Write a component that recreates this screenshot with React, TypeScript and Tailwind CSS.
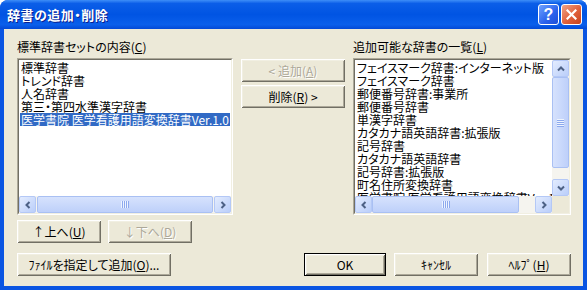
import React from "react";

type Dir = "left" | "right" | "up" | "down";

const CHEV: Record<Dir, string> = {
  left: "M5.5 1 L2.5 4 L5.5 7",
  right: "M2.5 1 L5.5 4 L2.5 7",
  up: "M1 5.5 L4 2.5 L7 5.5",
  down: "M1 2.5 L4 5.5 L7 2.5",
};

function ArrowBtn({ dir }: { dir: Dir }) {
  return (
    <div className="w-[17px] h-[17px] shrink-0 rounded-[2px] border border-[#B4C8F6] bg-[linear-gradient(135deg,#E3ECFE,#BACEFA)] flex items-center justify-center">
      <svg width="8" height="8" viewBox="0 0 8 8">
        <path d={CHEV[dir]} fill="none" stroke="#4D6185" strokeWidth="2" />
      </svg>
    </div>
  );
}

function GripV() {
  return (
    <svg width="8" height="7" viewBox="0 0 8 7">
      {[0, 2, 4, 6].map((x) => (
        <g key={x}>
          <rect x={x} y="0" width="1" height="7" fill="#EEF4FE" />
          <rect x={x + 1} y="0" width="1" height="7" fill="#8CA9EE" />
        </g>
      ))}
    </svg>
  );
}

function GripH() {
  return (
    <svg width="7" height="8" viewBox="0 0 7 8">
      {[0, 2, 4, 6].map((y) => (
        <g key={y}>
          <rect x="0" y={y} width="7" height="1" fill="#EEF4FE" />
          <rect x="0" y={y + 1} width="7" height="1" fill="#8CA9EE" />
        </g>
      ))}
    </svg>
  );
}

function U({ children }: { children: React.ReactNode }) {
  return <span className="underline underline-offset-[1px]">{children}</span>;
}

function Btn({
  children,
  className = "",
  disabled = false,
  def = false,
}: {
  children: React.ReactNode;
  className?: string;
  disabled?: boolean;
  def?: boolean;
}) {
  return (
    <div
      className={`h-[23px] shrink-0 flex items-center justify-center bg-[#ECE9D8] text-[12px] leading-[14px] whitespace-nowrap ${
        def
          ? "border border-black shadow-[inset_1px_1px_0_#fff,inset_-1px_-1px_0_#716F64,inset_2px_2px_0_#F1EFE2,inset_-2px_-2px_0_#ACA899]"
          : "shadow-[inset_1px_1px_0_#fff,inset_-1px_-1px_0_#716F64,inset_2px_2px_0_#F1EFE2,inset_-2px_-2px_0_#ACA899]"
      } ${disabled ? "text-[#ACA899] [text-shadow:1px_1px_0_#fff]" : "text-black"} ${className}`}
    >
      {children}
    </div>
  );
}

function Sunken({ children, className = "" }: { children: React.ReactNode; className?: string }) {
  return (
    <div className={`border border-t-[#ACA899] border-l-[#ACA899] border-b-white border-r-white ${className}`}>
      <div className="w-full h-full border border-t-[#716F64] border-l-[#716F64] border-b-[#F1EFE2] border-r-[#F1EFE2] bg-white flex flex-col overflow-hidden">
        {children}
      </div>
    </div>
  );
}

const leftItems = ["標準辞書", "トレンド辞書", "人名辞書", "第三・第四水準漢字辞書"];
const rightItems = [
  "フェイスマーク辞書:インターネット版",
  "フェイスマーク辞書",
  "郵便番号辞書:事業所",
  "郵便番号辞書",
  "単漢字辞書",
  "カタカナ語英語辞書:拡張版",
  "記号辞書",
  "カタカナ語英語辞書",
  "記号辞書:拡張版",
  "町名住所変換辞書",
  "医学書院 医学看護用語変換辞書Ver.1.0",
];

export default function App() {
  return (
    <div className="w-[587px] h-[290px] bg-white font-['Noto_Sans_CJK_JP','MS_UI_Gothic',sans-serif] [font-feature-settings:'palt'] text-black select-none">
      <div className="w-[587px] h-[290px] rounded-t-[8px] bg-[#0A55E2] flex flex-col overflow-hidden">
        {/* Title bar */}
        <div className="h-[29px] shrink-0 flex items-center pl-[7px] pr-[5px] bg-[linear-gradient(180deg,#3E8EF8_0%,#0B5EE8_12%,#0054E3_50%,#0A5FEB_85%,#0349D6_100%)]">
          <div className="flex-1 text-white font-bold text-[13px] leading-[16px] [text-shadow:1px_1px_0_#0A1F8F] tracking-[0.5px]">
            辞書の追加・削除
          </div>
          <div className="flex gap-[2px] items-center">
            <div className="w-[21px] h-[21px] rounded-[3px] border border-white bg-[linear-gradient(135deg,#6FA2FF,#2A62EC_60%,#1D4FD8)] flex items-center justify-center text-white font-bold text-[16px] leading-none font-['Liberation_Sans',sans-serif]">
              ?
            </div>
            <div className="w-[21px] h-[21px] rounded-[3px] border border-white bg-[linear-gradient(135deg,#F0A487,#E0603B_55%,#C8431C)] flex items-center justify-center">
              <svg width="11" height="11" viewBox="0 0 11 11">
                <path d="M1.5 1.5 L9.5 9.5 M9.5 1.5 L1.5 9.5" stroke="#fff" strokeWidth="2.2" strokeLinecap="square" />
              </svg>
            </div>
          </div>
        </div>

        {/* Client area */}
        <div className="flex-1 mx-[4px] mb-[4px] bg-[#ECE9D8] pl-[13px] pr-[12px] pt-[10px] flex flex-col text-[12px]">
          <div className="flex items-start">
            {/* Left column */}
            <div className="w-[216px] flex flex-col">
              <div className="h-[16px] leading-[16px] mb-[3px] whitespace-nowrap">
                標準辞書セットの内容(<U>C</U>)
              </div>
              <Sunken className="h-[157px]">
                <div className="flex-1 pt-[1px] px-[1px] overflow-hidden">
                  {leftItems.map((t) => (
                    <div key={t} className="h-[13px] leading-[13px] pl-[1px] whitespace-nowrap">
                      {t}
                    </div>
                  ))}
                  <div className="h-[13px] leading-[13px] pl-[1px] whitespace-nowrap bg-[#316AC5] text-white">
                    医学書院 医学看護用語変換辞書Ver.1.0
                  </div>
                </div>
                <div className="h-[17px] shrink-0 flex bg-[#F5F4EF]">
                  <ArrowBtn dir="left" />
                  <div className="flex-1 flex px-[1px]">
                    <div className="flex-1 rounded-[2px] border border-[#A9C0F3] bg-[linear-gradient(180deg,#D6E2FD,#BED0FA)] flex items-center justify-center">
                      <GripV />
                    </div>
                  </div>
                  <ArrowBtn dir="right" />
                </div>
              </Sunken>
            </div>

            {/* Middle column */}
            <div className="w-[104px] ml-[8px] mt-[20px] flex flex-col gap-[3px]">
              <Btn disabled>
                &lt; 追加(<U>A</U>)
              </Btn>
              <Btn>
                削除(<U>R</U>) &gt;
              </Btn>
            </div>

            {/* Right column */}
            <div className="w-[218px] ml-[8px] flex flex-col">
              <div className="h-[16px] leading-[16px] mb-[3px] whitespace-nowrap">
                追加可能な辞書の一覧(<U>L</U>)
              </div>
              <Sunken className="h-[157px]">
                <div className="flex-1 flex min-h-0">
                  <div className="flex-1 pt-[1px] pl-[2px] overflow-hidden">
                    {rightItems.map((t) => (
                      <div key={t} className="h-[13px] leading-[13px] whitespace-nowrap">
                        {t}
                      </div>
                    ))}
                  </div>
                  <div className="w-[17px] shrink-0 flex flex-col bg-[#F5F4EF]">
                    <ArrowBtn dir="up" />
                    <div className="h-[91px] rounded-[2px] border border-[#A9C0F3] bg-[linear-gradient(90deg,#D6E2FD,#BED0FA)] flex items-center justify-center">
                      <GripH />
                    </div>
                    <div className="flex-1" />
                    <ArrowBtn dir="down" />
                  </div>
                </div>
                <div className="h-[17px] shrink-0 flex">
                  <div className="flex-1 flex bg-[#F5F4EF]">
                    <ArrowBtn dir="left" />
                    <div className="flex-1 flex">
                      <div className="w-[147px] rounded-[2px] border border-[#A9C0F3] bg-[linear-gradient(180deg,#D6E2FD,#BED0FA)] flex items-center justify-center">
                        <GripV />
                      </div>
                    </div>
                    <ArrowBtn dir="right" />
                  </div>
                  <div className="w-[17px] shrink-0 bg-[#ECE9D8]" />
                </div>
              </Sunken>
            </div>
          </div>

          {/* Up / Down */}
          <div className="flex gap-[7px] mt-[5px]">
            <Btn className="w-[84px]">
              ↑上へ(<U>U</U>)
            </Btn>
            <Btn className="w-[84px]" disabled>
              ↓下へ(<U>D</U>)
            </Btn>
          </div>

          {/* Bottom row */}
          <div className="flex mt-[10px]">
            <Btn className="w-[154px]">
              ﾌｧｲﾙを指定して追加(<U>O</U>)...
            </Btn>
            <div className="flex-1" />
            <Btn className="w-[82px]" def>
              OK
            </Btn>
            <Btn className="w-[84px] ml-[8px]">ｷｬﾝｾﾙ</Btn>
            <Btn className="w-[84px] ml-[9px]">
              ﾍﾙﾌﾟ(<U>H</U>)
            </Btn>
          </div>
        </div>
      </div>
    </div>
  );
}
